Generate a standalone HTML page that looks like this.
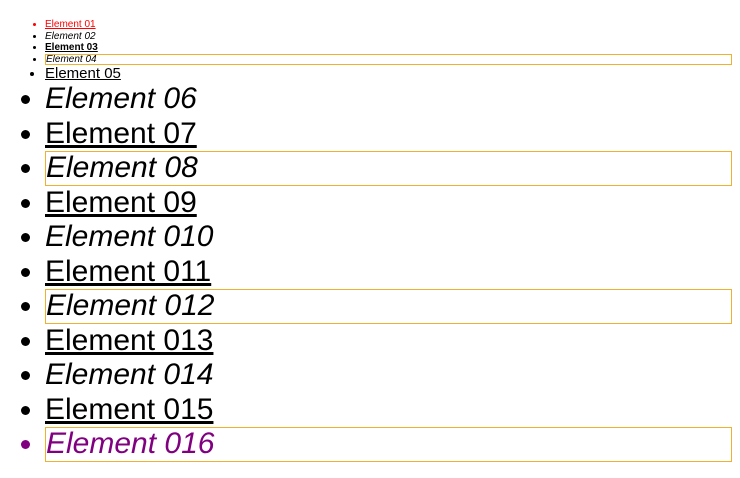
<!DOCTYPE html>
<html><head><style>
html,body{margin:0;padding:0;background:#fff;}
body{margin:8px;padding-top:11px;font-family:"Liberation Sans",sans-serif;}
ul{margin:0;padding-left:37px;list-style:disc;}
li{line-height:1.15;}
.s{font-size:10px}
.m{font-size:15px}
.l{font-size:30px}
.u{text-decoration:underline}
.i{font-style:italic}
.b{font-weight:bold}
.o{outline:1px solid #f0b030;outline-offset:-1px;padding-left:1px}
.red{color:#f00}
.pur{color:#800080}
</style></head><body>
<ul>
<li class="s red u">Element 01</li>
<li class="s i">Element 02</li>
<li class="s b u">Element 03</li>
<li class="s i o">Element 04</li>
<li class="m u">Element 05</li>
<li class="l i">Element 06</li>
<li class="l u">Element 07</li>
<li class="l i o">Element 08</li>
<li class="l u">Element 09</li>
<li class="l i">Element 010</li>
<li class="l u">Element 011</li>
<li class="l i o">Element 012</li>
<li class="l u">Element 013</li>
<li class="l i">Element 014</li>
<li class="l u">Element 015</li>
<li class="l i o pur">Element 016</li>
</ul>
</body></html>
